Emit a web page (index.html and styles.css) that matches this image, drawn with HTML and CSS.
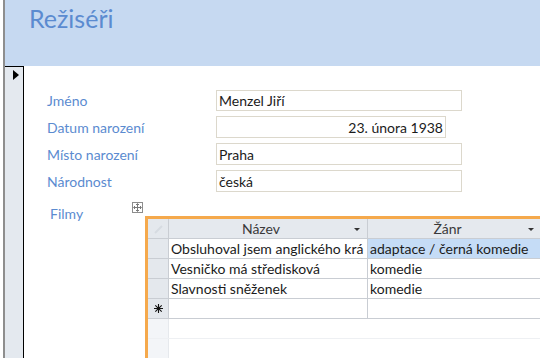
FILE: index.html
```html
<!DOCTYPE html>
<html lang="cs">
<head>
    <meta charset="UTF-8">
    <title>Režiséři</title>
    <link rel="stylesheet" href="styles.css">
</head>
<body>

    <div class="window">
        <div class="form-header">
            <h1 class="form-title">Režiséři</h1>
        </div>

        <div class="detail">
            <div class="record-selector">
                <svg width="6" height="10" viewBox="0 0 6 10"><polygon points="0,0 6,5 0,10" fill="#000"/></svg>
            </div>

            <div class="form-body">
                <div class="fields">
                    <label class="field-label">Jméno</label>
                    <div class="field">Menzel Jiří</div>

                    <label class="field-label">Datum narození</label>
                    <div class="field field-date">23. února 1938</div>

                    <label class="field-label">Místo narození</label>
                    <div class="field">Praha</div>

                    <label class="field-label">Národnost</label>
                    <div class="field">česká</div>
                </div>

                <div class="subform-row">
                    <label class="field-label subform-label">Filmy</label>
                    <svg class="move-handle" width="11" height="11" viewBox="0 0 11 11">
                        <rect x="0.5" y="0.5" width="10" height="10" fill="#fff" stroke="#8d8d8d"/>
                        <path d="M5.5 2v7M2 5.5h7" stroke="#7a7a7a" stroke-width="1"/>
                        <path d="M4 3l1.5-1.5L7 3M4 8l1.5 1.5L7 8M3 4L1.5 5.5 3 7M8 4l1.5 1.5L8 7" fill="none" stroke="#7a7a7a" stroke-width="1"/>
                    </svg>

                    <div class="subform">
                        <table class="datasheet">
                            <thead>
                                <tr>
                                    <th class="row-sel corner">
                                        <svg width="10" height="10" viewBox="0 0 10 10"><path d="M2 9L9 2" stroke="#d6dbe1" stroke-width="2"/></svg>
                                    </th>
                                    <th class="col-title">
                                        <span class="th-text">Název</span>
                                        <span class="dropdown"></span>
                                    </th>
                                    <th class="col-genre">
                                        <span class="th-text">Žánr</span>
                                        <span class="dropdown"></span>
                                    </th>
                                </tr>
                            </thead>
                            <tbody>
                                <tr>
                                    <td class="row-sel"></td>
                                    <td>Obsluhoval jsem anglického krá</td>
                                    <td class="selected">adaptace / černá komedie</td>
                                </tr>
                                <tr>
                                    <td class="row-sel"></td>
                                    <td>Vesničko má středisková</td>
                                    <td>komedie</td>
                                </tr>
                                <tr>
                                    <td class="row-sel"></td>
                                    <td>Slavnosti sněženek</td>
                                    <td>komedie</td>
                                </tr>
                                <tr class="new-row">
                                    <td class="row-sel">
                                        <svg width="9" height="9" viewBox="0 0 9 9"><path d="M4.5 0v9M0 4.5h9M1.3 1.3l6.4 6.4M7.7 1.3l-6.4 6.4" stroke="#111" stroke-width="1.1"/></svg>
                                    </td>
                                    <td></td>
                                    <td></td>
                                </tr>
                                <tr class="empty-row">
                                    <td class="row-sel"></td>
                                    <td></td>
                                    <td></td>
                                </tr>
                                <tr class="empty-row">
                                    <td class="row-sel"></td>
                                    <td></td>
                                    <td></td>
                                </tr>
                            </tbody>
                        </table>
                    </div>
                </div>
            </div>
        </div>
    </div>

</body>
</html>
```

FILE: styles.css
```css
html, body {
    margin: 0;
    height: 100%;
}
body {
    font-family: Lato, "Open Sans", sans-serif;
    font-size: 14px;
    background: #fff;
    padding-left: 3px;
    overflow: hidden;
    box-sizing: border-box;
}
.window {
    border-left: 2px solid #8e8e8e;
    height: 100%;
    display: flex;
    flex-direction: column;
}
.form-header {
    flex: none;
    height: 66px;
    background: #c6d9f1;
    padding-left: 24px;
    box-sizing: border-box;
}
.form-title {
    margin: 0;
    padding-top: 3px;
    font-size: 25px;
    font-weight: normal;
    color: #5b8bd0;
}
.detail {
    flex: 1;
    display: flex;
    min-height: 0;
}
.record-selector {
    flex: none;
    width: 19px;
    background: #e4e9ef;
    border-right: 1px solid #000;
    border-top: 1px solid #000;
    padding: 3px 0 0 8px;
    box-sizing: border-box;
}
.record-selector svg {
    display: block;
}
.form-body {
    flex: 1;
    min-width: 0;
    padding: 24px 0 0 23px;
    display: flex;
    flex-direction: column;
}
.fields {
    display: grid;
    grid-template-columns: 169px auto;
    grid-template-rows: 21px 22px 22px 22px;
    row-gap: 5px;
    align-items: center;
}
.field-label {
    color: #5b8bd0;
    font-size: 14px;
}
.field {
    width: 246px;
    height: 100%;
    box-sizing: border-box;
    border: 1px solid #dcd8cc;
    padding: 0 2px;
    display: flex;
    align-items: center;
    color: #1b1b1b;
}
.field-date {
    width: 230px;
    justify-content: flex-end;
}
.subform-row {
    flex: 1;
    min-height: 0;
    display: flex;
    align-items: flex-start;
    margin-top: 10px;
}
.subform-label {
    flex: none;
    width: 85px;
    padding: 3px 0 0 3px;
    box-sizing: border-box;
}
.move-handle {
    display: block;
    flex: none;
}
.subform {
    flex: 1;
    min-width: 0;
    align-self: stretch;
    margin: 14px 0 0 2px;
    border: 3px solid #f5a94c;
    border-right: none;
    border-bottom: none;
    background: #fff;
    overflow: hidden;
}
.datasheet {
    border-collapse: collapse;
    table-layout: fixed;
    width: 394px;
}
.datasheet th,
.datasheet td {
    height: 19px;
    padding: 0 0 0 2px;
    border-right: 1px solid #c9cdd3;
    border-bottom: 1px solid #c9cdd3;
    white-space: nowrap;
    overflow: hidden;
    color: #1b1b1b;
    line-height: 19px;
}
.datasheet th {
    background: #e5e9ee;
    font-weight: normal;
    color: #3a3a3a;
    position: relative;
    padding-right: 16px;
}
.datasheet .row-sel {
    width: 20px;
    padding: 0;
    background: #e4e8ed;
    text-align: center;
}
.datasheet .corner {
    padding: 0;
}
.corner svg {
    display: block;
    margin: 2px 0 0 4px;
}
.row-sel svg {
    display: block;
    margin: 0 auto;
}
.col-title {
    width: 180px;
}
.col-genre {
    width: 155px;
}
.dropdown {
    position: absolute;
    right: 7px;
    top: 9px;
    border-left: 3px solid transparent;
    border-right: 3px solid transparent;
    border-top: 3px solid #333;
}
.selected {
    background: #c5dcf6;
}
.empty-row td {
    border-right-color: #fff;
    border-bottom-color: #eef0f3;
}
.empty-row .row-sel {
    background: #f3f5f8;
    border-right-color: #e6e9ed;
}
```
